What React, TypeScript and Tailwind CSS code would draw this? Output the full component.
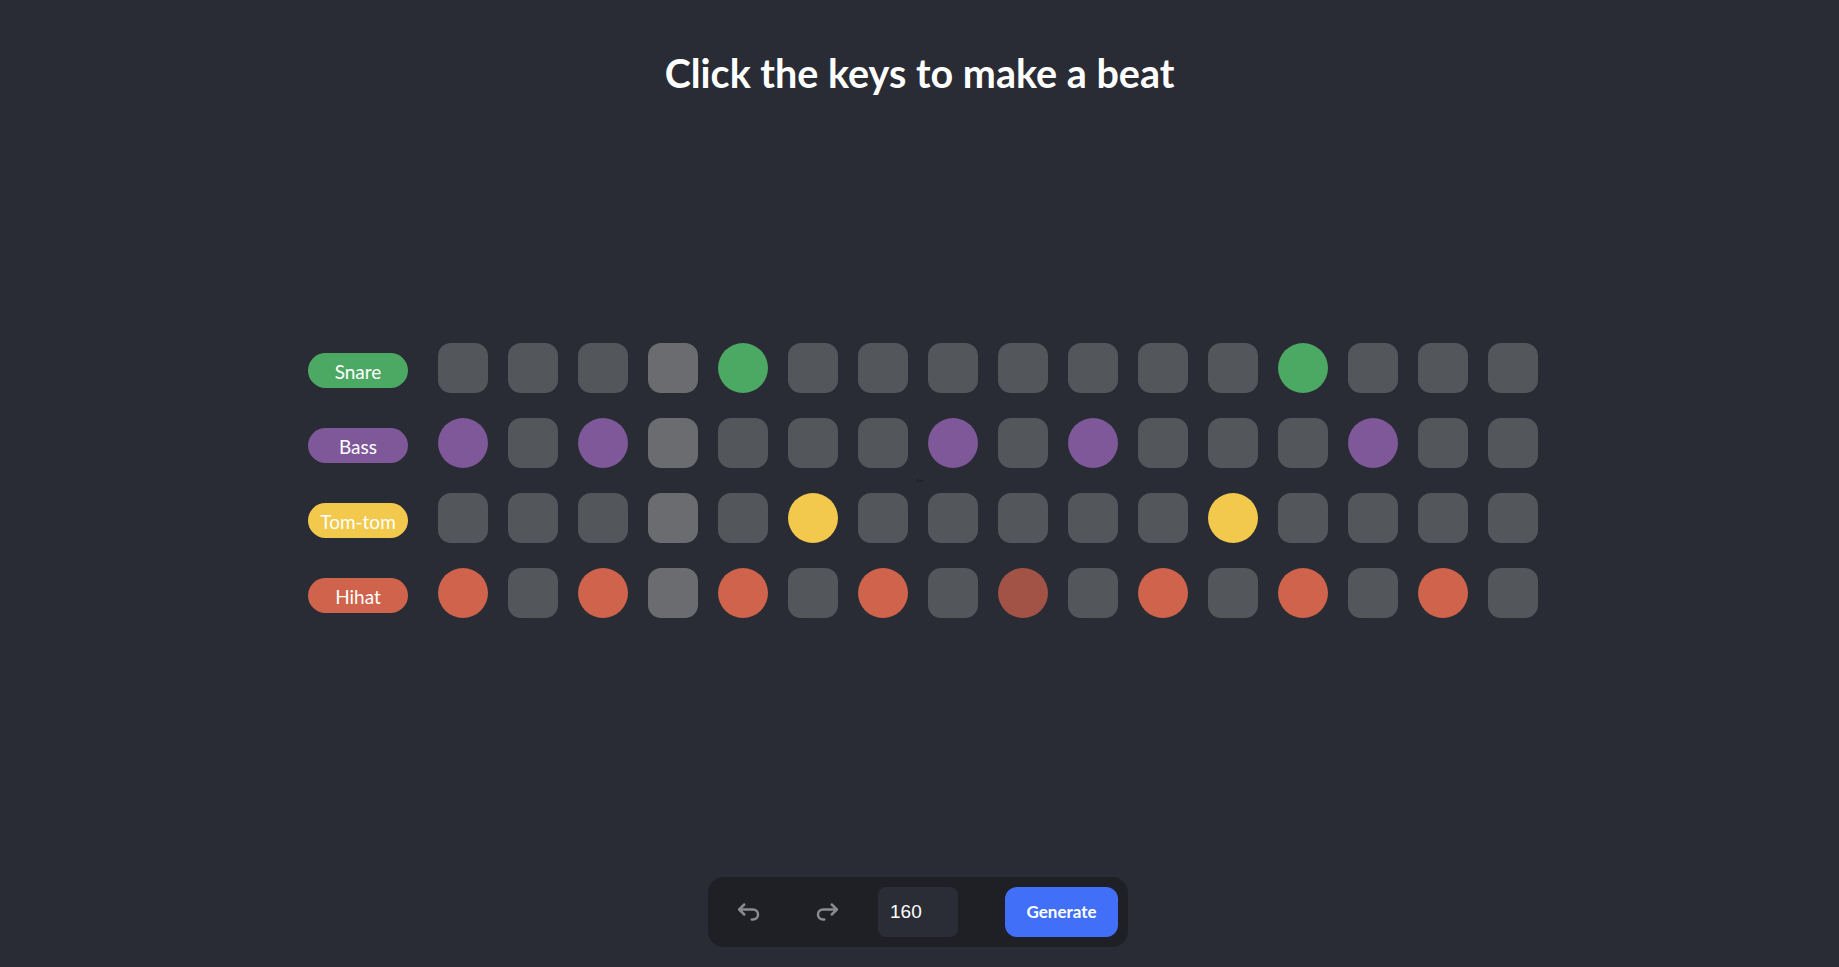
import React from "react";

const rows = [
  { name: "Snare", label: "bg-[#4ca964]", on: "bg-[#4ca964]", active: [4, 12] },
  { name: "Bass", label: "bg-[#7e5899]", on: "bg-[#7e5899]", active: [0, 2, 7, 9, 13] },
  { name: "Tom-tom", label: "bg-[#f2c94c]", on: "bg-[#f2c94c]", active: [5, 11] },
  { name: "Hihat", label: "bg-[#cf634b]", on: "bg-[#cf634b]", active: [0, 2, 4, 6, 8, 10, 12, 14] },
];

function UndoIcon({ flip = false }: { flip?: boolean }) {
  return (
    <svg width="30" height="30" viewBox="0 0 24 24" fill="none" stroke="currentColor" strokeWidth="2" strokeLinecap="round" strokeLinejoin="round" style={flip ? { transform: "scaleX(-1)" } : undefined}>
      <path d="M9 14l-4 -4l4 -4" />
      <path d="M5 10h11a4 4 0 1 1 0 8h-1" />
    </svg>
  );
}

export default function App() {
  return (
    <div className="relative h-[967px] w-full overflow-hidden bg-[#292c34] flex flex-col items-center" style={{ fontFamily: "Lato, 'Noto Sans', sans-serif" }}>
      <h1 className="mt-[46px] text-[39.5px] leading-[54px] font-bold text-white">Click the keys to make a beat</h1>

      <div className="mt-[243px] flex flex-col gap-[25px] pl-[7px]">
        {rows.map((r, ri) => (
          <div key={r.name} className="flex items-start">
            <div className={`mt-[10px] w-[100px] h-[35px] rounded-full ${r.label} flex items-center justify-center text-white text-[19px] leading-none pt-[1px]`}>
              {r.name}
            </div>
            <div className="ml-[30px] flex gap-[20px]">
              {Array.from({ length: 16 }).map((_, i) => {
                const isOn = r.active.includes(i);
                let cls = "w-[50px] h-[50px] ";
                if (isOn) {
                  cls += "rounded-full " + (ri === 3 && i === 8 ? "bg-[#a35246]" : r.on);
                } else {
                  cls += "rounded-[13px] " + (i === 3 ? "bg-[#6b6c70]" : "bg-[#53565b]");
                }
                return <div key={i} className={cls} />;
              })}
            </div>
          </div>
        ))}
      </div>

      <div className="absolute left-[916px] top-[478px] text-[4px] leading-[5px] text-[#111]">Text</div>

      <div className="mt-auto mb-[20px] mr-[3px] w-[420px] h-[70px] rounded-[16px] bg-[#1f2025] flex items-center px-[10px]">
        <button className="w-[60px] h-[50px] flex items-center justify-center text-[#8a8b8f]">
          <UndoIcon />
        </button>
        <button className="ml-[20px] w-[60px] h-[50px] flex items-center justify-center text-[#8a8b8f]">
          <UndoIcon flip />
        </button>
        <div className="ml-[20px] w-[80px] h-[50px] rounded-[8px] bg-[#2a2d35] flex items-center pl-[12px] text-white text-[19px]" style={{ fontFamily: "'Liberation Sans', Arial, sans-serif" }}>
          160
        </div>
        <button className="ml-[47px] w-[113px] h-[50px] rounded-[12px] bg-[#416ff7] text-white font-bold text-[17px]">
          Generate
        </button>
      </div>
    </div>
  );
}
